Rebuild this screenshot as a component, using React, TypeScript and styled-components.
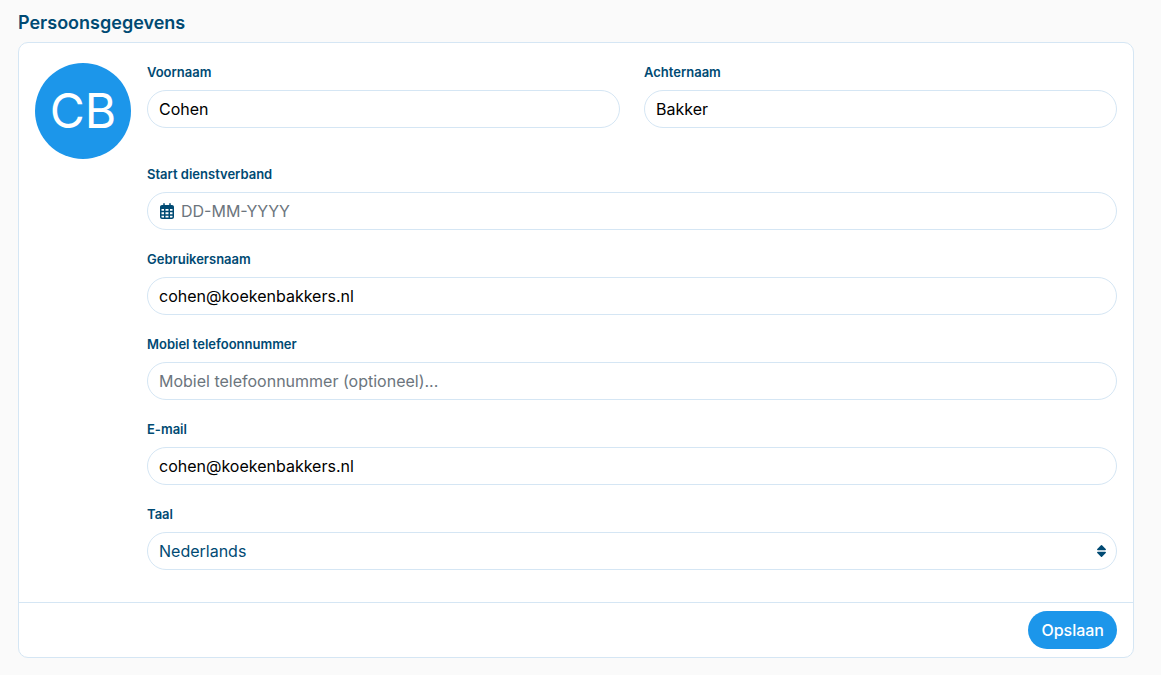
import React from "react";
import styled, { createGlobalStyle } from "styled-components";
import { FaRegCalendarDays } from "react-icons/fa6";

const color = {
  page: "#fafafa",
  surface: "#ffffff",
  border: "#d5e6f4",
  ink: "#004a73",
  primary: "#1c96ea",
  muted: "#6c757d",
};

const GlobalStyle = createGlobalStyle`
  *, *::before, *::after { box-sizing: border-box; }
  body {
    margin: 0;
    background: ${color.page};
    color: ${color.ink};
    font-family: Inter, "Liberation Sans", sans-serif;
    font-size: 16px;
    line-height: 24px;
  }
`;

const Page = styled.main`
  padding: 12px 27px 16px 18px;
`;

const Title = styled.h1`
  margin: 0 0 8px;
  font-size: 18px;
  font-weight: 600;
  line-height: 22px;
`;

const Card = styled.form`
  background: ${color.surface};
  border: 1px solid ${color.border};
  border-radius: 10px;
`;

const CardBody = styled.div`
  display: flex;
  align-items: flex-start;
  gap: 16px;
  padding: 19px 16px 32px;
`;

const Avatar = styled.div`
  flex: none;
  display: flex;
  align-items: center;
  justify-content: center;
  width: 96px;
  height: 96px;
  margin-top: 1px;
  border-radius: 50%;
  background: ${color.primary};
  color: #ffffff;
  font-size: 48px;
  line-height: 48px;
`;

const Fields = styled.div`
  flex: 1;
  min-width: 0;
  display: flex;
  flex-direction: column;
  gap: 19px;
`;

const NameRow = styled.div`
  display: grid;
  grid-template-columns: 1fr 1fr;
  gap: 24px;
  padding-bottom: 17px;
`;

const Field = styled.div`
  display: flex;
  flex-direction: column;
  gap: 8px;
  min-width: 0;
`;

const Label = styled.label`
  font-size: 13px;
  font-weight: 600;
  line-height: 20px;
`;

const Control = styled.div`
  display: flex;
  align-items: center;
  gap: 6px;
  height: 38px;
  padding: 0 11px;
  border: 1px solid ${color.border};
  border-radius: 19px;
  background: ${color.surface};

  svg {
    flex: none;
    pointer-events: none;
  }
`;

const TextInput = styled.input`
  flex: 1;
  min-width: 0;
  height: 24px;
  padding: 0;
  border: 0;
  outline: 0;
  background: transparent;
  color: #000000;
  font: inherit;

  &::placeholder {
    color: ${color.muted};
    opacity: 1;
  }
`;

const SelectBox = styled.div`
  display: grid;
  align-items: center;

  > * {
    grid-area: 1 / 1;
  }

  svg {
    justify-self: end;
    margin-right: 11px;
    pointer-events: none;
  }
`;

const Select = styled.select`
  appearance: none;
  width: 100%;
  height: 38px;
  padding: 0 36px 0 11px;
  border: 1px solid ${color.border};
  border-radius: 19px;
  background: ${color.surface};
  color: ${color.ink};
  font: inherit;
`;

const CardFooter = styled.footer`
  display: flex;
  justify-content: flex-end;
  padding: 8px 16px;
  border-top: 1px solid ${color.border};
`;

const SaveButton = styled.button`
  height: 38px;
  padding: 0 13px;
  border: 0;
  border-radius: 19px;
  background: ${color.primary};
  color: #ffffff;
  font: inherit;
  font-weight: 500;
  cursor: pointer;
`;

function SortArrows() {
  return (
    <svg width="9" height="12" viewBox="0 0 9 12" aria-hidden="true">
      <path
        d="M4.5 0.9 8.2 4.5V4.6H0.8V4.5ZM4.5 11.1 0.8 7.5V7.4H8.2V7.5Z"
        fill="currentColor"
        stroke="currentColor"
        strokeWidth="1.5"
        strokeLinejoin="round"
      />
    </svg>
  );
}

interface TextFieldProps {
  id: string;
  label: string;
  type?: string;
  value?: string;
  placeholder?: string;
  icon?: React.ReactNode;
}

function TextField({ id, label, type = "text", value, placeholder, icon }: TextFieldProps) {
  return (
    <Field>
      <Label htmlFor={id}>{label}</Label>
      <Control>
        {icon}
        <TextInput id={id} type={type} defaultValue={value} placeholder={placeholder} />
      </Control>
    </Field>
  );
}

export default function App() {
  return (
    <>
      <GlobalStyle />
      <Page>
        <Title>Persoonsgegevens</Title>
        <Card onSubmit={(event) => event.preventDefault()}>
          <CardBody>
            <Avatar>CB</Avatar>
            <Fields>
              <NameRow>
                <TextField id="first-name" label="Voornaam" value="Cohen" />
                <TextField id="last-name" label="Achternaam" value="Bakker" />
              </NameRow>
              <TextField
                id="start-date"
                label="Start dienstverband"
                placeholder="DD-MM-YYYY"
                icon={<FaRegCalendarDays size={16} aria-hidden />}
              />
              <TextField id="username" label="Gebruikersnaam" value="cohen@koekenbakkers.nl" />
              <TextField
                id="mobile"
                label="Mobiel telefoonnummer"
                type="tel"
                placeholder="Mobiel telefoonnummer (optioneel)..."
              />
              <TextField id="email" label="E-mail" type="email" value="cohen@koekenbakkers.nl" />
              <Field>
                <Label htmlFor="language">Taal</Label>
                <SelectBox>
                  <Select id="language" defaultValue="nl">
                    <option value="nl">Nederlands</option>
                  </Select>
                  <SortArrows />
                </SelectBox>
              </Field>
            </Fields>
          </CardBody>
          <CardFooter>
            <SaveButton type="submit">Opslaan</SaveButton>
          </CardFooter>
        </Card>
      </Page>
    </>
  );
}
